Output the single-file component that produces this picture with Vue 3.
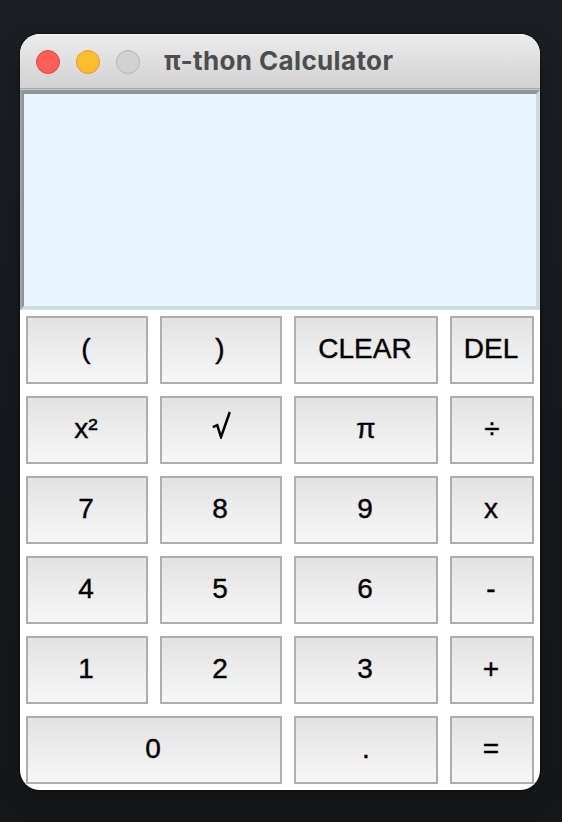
<script setup>
import { ref } from 'vue'

const expression = ref('')

const keys = [
  { label: '(' },
  { label: ')' },
  { label: 'CLEAR' },
  { label: 'DEL' },
  { label: 'x²' },
  { label: '√', root: true },
  { label: 'π', nudge: true },
  { label: '÷', nudge: true },
  { label: '7' },
  { label: '8' },
  { label: '9' },
  { label: 'x' },
  { label: '4' },
  { label: '5' },
  { label: '6' },
  { label: '-' },
  { label: '1' },
  { label: '2' },
  { label: '3' },
  { label: '+' },
  { label: '0', wide: true },
  { label: '.', nudge: true },
  { label: '=' },
]

function press(label) {
  if (label === 'CLEAR') expression.value = ''
  else if (label === 'DEL') expression.value = expression.value.slice(0, -1)
  else if (label !== '=') expression.value += label
}
</script>

<template>
  <main class="desktop">
    <section class="window">
      <header class="titlebar">
        <span class="light close"></span>
        <span class="light minimize"></span>
        <span class="light zoom"></span>
        <h1 class="title">π-thon Calculator</h1>
      </header>
      <div class="display"><div class="screen">{{ expression }}</div></div>
      <div class="keypad">
        <button
          v-for="key in keys"
          :key="key.label"
          class="key"
          :class="{ wide: key.wide, nudge: key.nudge }"
          @click="press(key.label)"
        >
          <svg v-if="key.root" class="root" viewBox="0 0 20 28" role="img" aria-label="√">
            <path d="M1.8 16.2 6.2 14.2 10 26 18.8 1" />
          </svg>
          <span v-else>{{ key.label }}</span>
        </button>
      </div>
    </section>
  </main>
</template>

<style>
body {
  background: #16181d;
}
</style>

<style scoped>
.desktop {
  box-sizing: border-box;
  height: 822px;
  padding: 34px 22px 32px 20px;
  background: linear-gradient(#1b1e23, #17191e 50%, #15171b);
  overflow: hidden;
}
.window {
  width: 520px;
  height: 756px;
  border-radius: 20px;
  overflow: hidden;
  background: #fff;
  box-shadow: 0 0 2px #000, 0 12px 24px rgba(0, 0, 0, 0.2);
}
.titlebar {
  box-sizing: border-box;
  display: flex;
  align-items: center;
  height: 56px;
  padding: 0 16px;
  gap: 16px;
  background: linear-gradient(#ececec, #d1d1d1);
  border-bottom: 1px solid #c8c8c8;
  box-shadow: inset 0 1px #f6f6f6, inset 0 -1px #a9a9a9;
}
.light {
  box-sizing: border-box;
  width: 24px;
  height: 24px;
  border-radius: 50%;
  border: 1px solid;
}
.close {
  background: #ff5f57;
  border-color: #e2463f;
}
.minimize {
  background: #febc2e;
  border-color: #e0a027;
}
.zoom {
  background: #d2d2d2;
  border-color: #b4b4b4;
}
.title {
  margin: 0 0 2px 8px;
  font: 700 26px/30px Inter, "Liberation Sans", sans-serif;
  letter-spacing: 0.36px;
  color: #4d4d4d;
  white-space: nowrap;
}
.display {
  box-sizing: border-box;
  height: 220px;
  border: 2px solid;
  border-color: #8e979d #cedbe3 #cedbe3 #a1a5a7;
}
.screen {
  box-sizing: border-box;
  height: 216px;
  padding: 8px;
  border: 2px solid;
  border-color: #8a949a #cedbe3 #cedbe3 #8a949a;
  background: #e6f4ff;
  font: 28px "Liberation Sans", sans-serif;
}
.keypad {
  display: grid;
  grid-template-columns: 122px 122px 144px 84px;
  grid-auto-rows: 68px;
  gap: 12px;
  padding: 6px;
}
.key {
  box-sizing: border-box;
  display: flex;
  align-items: center;
  justify-content: center;
  margin: 0;
  padding: 0 2px 2px 0;
  border: 2px solid #aeaeae;
  border-radius: 0;
  background: linear-gradient(#e2e2e2, #f7f7f7);
  color: #000;
  font: 28px/32px "Liberation Sans", Arial, sans-serif;
  -webkit-text-stroke: 0.4px #000;
}
.wide {
  grid-column: span 2;
}
.nudge {
  padding-right: 0;
}
.root {
  width: 20px;
  height: 28px;
  margin: 0 0 8px 2px;
  fill: none;
  stroke: #000;
  stroke-width: 2.5;
}
</style>
